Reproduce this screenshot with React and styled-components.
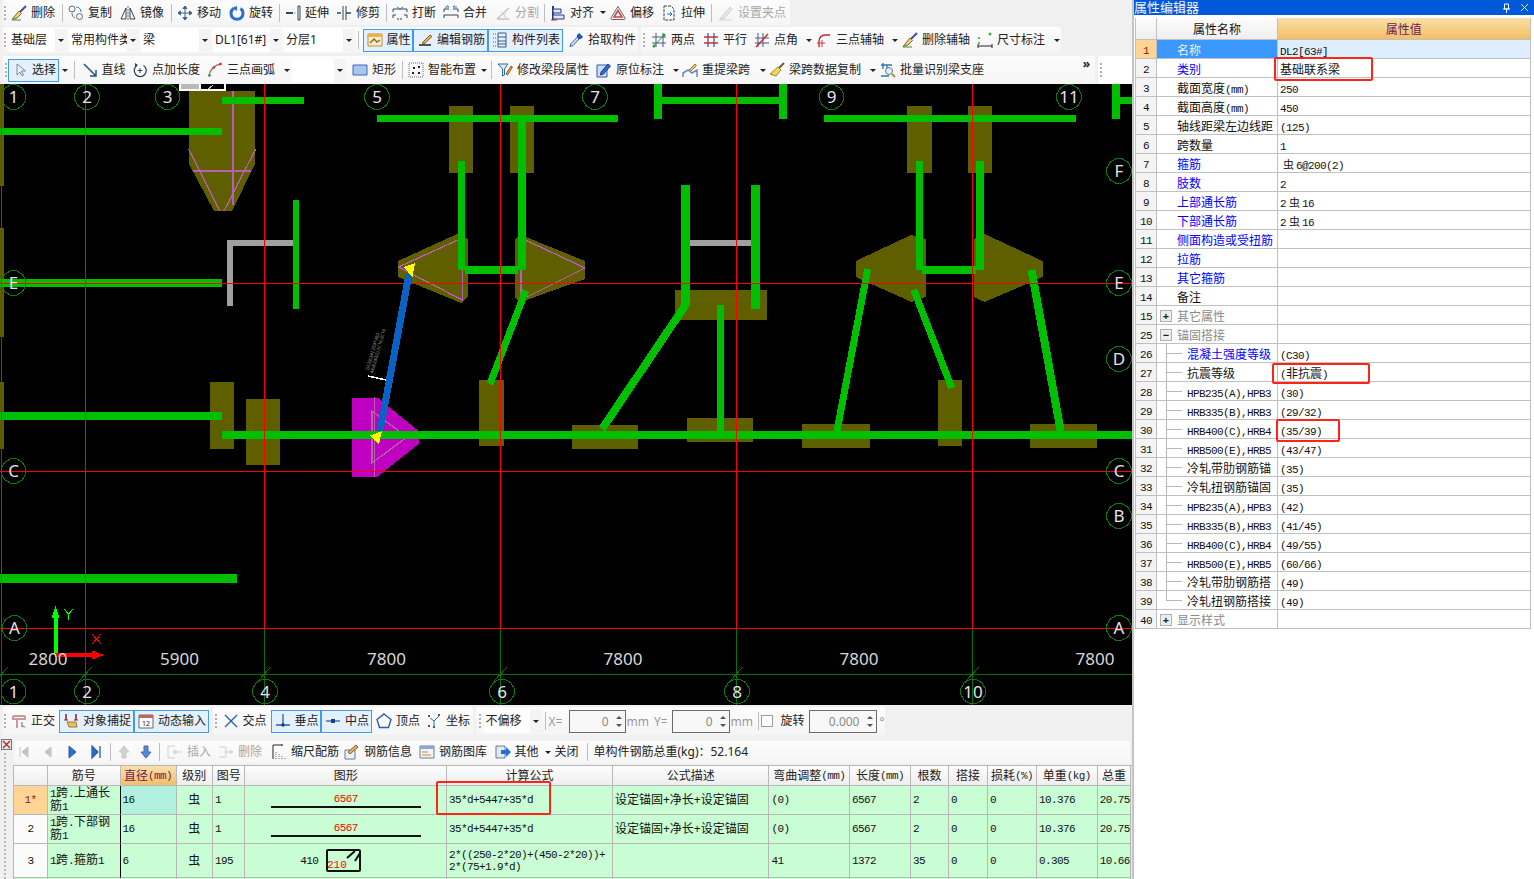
import React from 'react';
import styled, { createGlobalStyle } from 'styled-components';

const GlobalStyle = createGlobalStyle`
  html, body { margin: 0; padding: 0; background: #f0f0f0; }
  body { font-family: "Noto Sans", "Noto Sans CJK SC", sans-serif; font-size: 12px; color: #222; }
`;

/* ---------- icons ---------- */
const ICONS = {
  broom: <><path d="M15 1 9 7" stroke="#4a4a9a" strokeWidth="2" /><path d="M8 6l2.500 2.500L6 13l-5 1.500z" fill="#e8cf86" stroke="#8a6a22" /><path d="M1 15h9" stroke="#3b8f3b" /></>,
  copy: <><circle cx="4" cy="4" r="3" stroke="#667" /><circle cx="11.500" cy="11.500" r="3" stroke="#667" /><path d="M8 2c3 0 5 2 5 5M4 8c0 3 1 4 3 5" stroke="#3a78c8" /></>,
  mirror: <><path d="M8 1v14" stroke="#667" strokeDasharray="2 1" /><path d="M6 3v11H1z" stroke="#345" /><path d="M10 3v11h5z" stroke="#345" /></>,
  move: <path d="M8 1v14M1 8h14M8 1 6 3.500h4zM8 15l-2-2.500h4zM1 8l2.500-2v4zM15 8l-2.500-2v4z" stroke="#40618a" fill="#40618a" />,
  rotate: <><path d="M4.500 3.500a6 6 0 1 0 7 0" stroke="#2a6fd0" strokeWidth="3" /><path d="M8 1v5L3 3z" fill="#2a6fd0" /></>,
  extend: <><path d="M1 8h7" stroke="#345" strokeWidth="2" /><path d="M9 8h2" stroke="#8ab" /><path d="M13 1h2v14h-2z" stroke="#345" /></>,
  trim: <><path d="M1 8h4M10 8h5" stroke="#345" strokeWidth="1.500" /><path d="M7 1v14M10 1v14" stroke="#345" /></>,
  split: <><path d="M1 7V4h14v3M1 13v-3h3M15 13v-3h-3" stroke="#345" /><path d="M8 4 5 2M8 4l3-2" stroke="#2a7fd0" /><path d="M5 14h6" stroke="#345" strokeDasharray="2 1" /></>,
  merge: <><path d="M1 7V4h5M15 7V4h-5M1 13v-3h14v3" stroke="#345" /><path d="M2 2h4l-2-1.500M14 2h-4l2-1.500" stroke="#2a7fd0" /></>,
  cut: <><path d="M2 14 14 3M2 14h12" stroke="#b5b5b5" strokeWidth="1.500" /><path d="M6 7l6 6M10 5v8" stroke="#c8c8c8" /></>,
  align: <><path d="M3 1v14" stroke="#223a8a" strokeWidth="2" /><path d="M3 4h8v4H3zM3 10h11v4H3z" fill="#dfe6f5" stroke="#223a8a" /><path d="M1 15h6" stroke="#c22" /></>,
  offset: <><path d="M8 1.500 15 13a1 1 0 0 1-1 1.500H2A1 1 0 0 1 1 13z" stroke="#667" /><path d="M8 5.500 12 12H4z" stroke="#d04040" strokeWidth="1.500" /></>,
  stretch: <><path d="M3 1h7l3 3v11H3z" stroke="#345" strokeDasharray="3 1" /><path d="M6 9h5M9 7l2 2-2 2" stroke="#2a6fd0" /></>,
  grip: <><path d="M2 14 12 2l2 2L6 14z" fill="#e4e4e4" stroke="#c0c0c0" /><path d="M1 15h13" stroke="#c8c8c8" /></>,
  prop: <><path d="M1 2h14v12H1z" fill="#fff1cf" stroke="#c98a2a" /><path d="M1 2h14v3H1z" fill="#f0b050" /><path d="M3 11l4-4 3 3 3-2" stroke="#8a6a22" strokeWidth="1.500" /></>,
  edit: <><path d="M2 13h12" stroke="#222" strokeWidth="1.500" /><path d="M5 11 13 3l2 1.500L7 12z" fill="#e8b060" stroke="#8a5a22" /></>,
  list: <><path d="M1 2h3M1 6h3M1 10h3M1 14h3" stroke="#667" strokeDasharray="1 1" /><path d="M6 1h8v14H6zM6 5h8M6 9h8M6 12h8" stroke="#3a5a8a" /></>,
  pick: <><path d="M11 1.500 14.500 5 12 7 9 4z" fill="#2a5fb0" stroke="#1a3f80" /><path d="M9.500 5 3 11.500 2 14.500l3-1L11 7z" fill="#cfe3fa" stroke="#2a5fb0" /></>,
  twopoint: <><path d="M5 1v14M12 1v14M1 5h14M1 11h14" stroke="#4a5a8a" /><path d="M3 14 14 2" stroke="#3b8f3b" /><circle cx="3" cy="14" r="1.500" fill="#3b8f3b" /><circle cx="13" cy="3" r="1.500" fill="#3b8f3b" /></>,
  parallel: <><path d="M5 1v14M11 1v14" stroke="#4a5a9a" strokeWidth="1.300" /><path d="M1 5h14M1 11h14" stroke="#c03040" strokeWidth="1.300" /></>,
  angle: <><path d="M4 1v14M9 1v14M1 6h14M1 11h14" stroke="#4a5a8a" /><path d="M2 15 14 2" stroke="#d02020" strokeWidth="1.300" /></>,
  arcaxis: <><path d="M3 15V9a6 6 0 0 1 6-6h5" stroke="#d02030" strokeWidth="1.400" /><path d="M1 11h8M6 8v7" stroke="#c04050" /></>,
  dim: <><circle cx="2" cy="6" r="1" fill="#3b9b3b" /><circle cx="13" cy="2" r="1.500" fill="#3bbb3b" /><circle cx="2" cy="11" r="1" fill="#3b9b3b" /><path d="M1 14h14M1 12v4M15 12v4" stroke="#222" /></>,
  pointer: <path d="M5 2v11l3-3 2 4 1.500-1-2-4h4z" fill="#eef2fa" stroke="#7a8aa8" />,
  line: <path d="M2 2 14 14M14 8v6H8" stroke="#24557f" strokeWidth="1.500" />,
  length: <><path d="M5 3.500a6 6 0 1 0 6.500 0" stroke="#345" strokeWidth="1.300" /><path d="M8 6v5M5.500 8.500h5" stroke="#345" /><path d="M3 1l3 2-3 2z" fill="#345" /></>,
  arc: <><path d="M2 14C3 7 8 3 14 2" stroke="#d06030" strokeWidth="1.300" /><circle cx="2.500" cy="13.500" r="1.300" fill="#2a6fd0" /><circle cx="7" cy="5.500" r="1.300" fill="#2a6fd0" /><circle cx="13.500" cy="2" r="1.300" fill="#d02020" /></>,
  rect: <path d="M1 3h14v10H1z" fill="#a9c6ee" stroke="#3a68b8" />,
  smart: <><path d="M1 1h14v14H1z" stroke="#667" strokeDasharray="1 1" /><path d="M5 5h2v2H5zM10 4h2v2h-2zM4 10h2v2H4zM10 10h2v2h-2z" fill="#223" /></>,
  funnel: <><path d="M1 2h10L7.500 7v6l-2 1V7z" fill="#dbeaf8" stroke="#2a6f9f" /><path d="M9 12l5-8 1.500 1-5 8z" fill="#e8b060" stroke="#8a5a22" /></>,
  inplace: <><path d="M1 3h10v12H1z" fill="#cfe0f5" stroke="#2a5fb0" /><path d="M5 10l7-8 2.500 2-7 8-3 1z" fill="#2a6fd0" stroke="#1a3f80" /></>,
  respan: <><path d="M1 15v-4l5-3 4 3 5-3v7" stroke="#6a8ac0" strokeWidth="1.500" /><path d="M7 8l6-6 1.500 1.500-6 6z" fill="#e8c080" stroke="#a07a40" /></>,
  brushy: <><path d="M15 1 9 7" stroke="#6a5a3a" strokeWidth="2" /><path d="M9 5l3 3-5 6-6-2z" fill="#f0d860" stroke="#a08a2a" /></>,
  batch: <><path d="M1 3h11M3 1v6M1 14h8M7 3v5" stroke="#2a78b8" strokeWidth="1.400" /><circle cx="9" cy="9" r="3.500" fill="#e4eef8" stroke="#6a7a8a" /><path d="M12 12l3 3" stroke="#b08a3a" strokeWidth="2" /></>,
  ortho: <><path d="M2 3h12M2 3v3h12V3M6 6v9" stroke="#c89a9a" strokeWidth="2" /><path d="M11 9v5l1.500-1 1.500 1.500" stroke="#667" /></>,
  snap: <><path d="M3 1v6M13 1v6" stroke="#8a2020" strokeWidth="1.500" /><path d="M1 7h4M11 7h4" stroke="#8a2020" /><path d="M4 9h9l1 5H6z" fill="#e8c060" stroke="#a07a30" /></>,
  dyn: <><path d="M1 2h14v13H1z" fill="#fff" stroke="#667" /><path d="M1 2h14v3H1z" fill="#c86060" /><text x="4" y="13" fontSize="7" fill="#222" stroke="none">12</text></>,
  cross: <path d="M2 2 14 14M14 2 2 14" stroke="#2a5fb0" strokeWidth="1.400" />,
  perp: <><path d="M1 12h14M8 1v11" stroke="#2a5fa8" strokeWidth="1.300" /><circle cx="8" cy="12" r="1.800" fill="#1a3f80" /></>,
  mid: <><path d="M1 8h14" stroke="#2a5fa8" strokeWidth="1.300" /><path d="M6 6h4v4H6z" fill="#1a3f80" /></>,
  vertex: <path d="M8 1 15 6.500 12.500 14.500h-9L1 6.500z" stroke="#2a5fb0" strokeWidth="1.400" />,
  coord: <><path d="M4 5 8 8 13 3M8 8v5" stroke="#2a6fb0" /><circle cx="3" cy="3" r="1" fill="#223" /><circle cx="13" cy="2" r="1" fill="#223" /><circle cx="3" cy="13" r="1" fill="#223" /><circle cx="8" cy="14" r="1" fill="#223" /></>,
  first: <path d="M4 3v10M12 3v10L6 8z" fill="#c4c4c4" stroke="#c4c4c4" />,
  prev: <path d="M11 3v10L5 8z" fill="#c4c4c4" stroke="#c4c4c4" />,
  next: <path d="M5 2v12l7-6z" fill="#2a6fd0" stroke="#2a5fb0" />,
  last: <path d="M12 2v12M4 2v12l6-6z" fill="#2a6fd0" stroke="#2a5fb0" strokeWidth="1.300" />,
  up: <path d="M8 2 13 8h-3v6H6V8H3z" fill="#d0d0d0" stroke="#c8c8c8" />,
  down: <path d="M8 14 13 8h-3V2H6v6H3z" fill="#5a86d8" stroke="#3a68b8" />,
  insert: <><path d="M1 2h7M1 14h7M1 2v12M6 8h9M6 8l3-2v4z" stroke="#c4c4c4" /></>,
  remove: <><path d="M1 3h7v10H1M6 8h9M15 8l-3-2v4z" stroke="#c4c4c4" /></>,
  scale: <><path d="M2 1h10M2 1v14" stroke="#223" /><path d="M12 1l-2-1v2z" fill="#d02020" /><path d="M5 15V7M8 15v-5M11 15v-3M14 15v-2" stroke="#667" strokeDasharray="1 1" /></>,
  info: <><path d="M1 6h10v9H1z" fill="#eaf1fb" stroke="#6a7a8a" /><path d="M4 8l8-7 2 2-8 7z" fill="#e8b060" stroke="#8a5a22" /></>,
  lib: <><path d="M1 2h14v12H1z" fill="#f4f4f4" stroke="#6a7a9a" /><path d="M1 2h14v3H1z" fill="#8aa8d8" /><path d="M3 8h6M3 11h9" stroke="#c08a3a" /></>,
  other: <><path d="M1 2h9v12H1z" fill="#dfe8f5" stroke="#6a7a9a" /><path d="M6 6h5V3l5 5-5 5v-3H6z" fill="#2a6fd0" /></>,
};

const Glyph = styled.svg`
  width: 16px;
  height: 16px;
  flex: none;
  ${(p) => (p.$dim ? 'opacity: .75;' : '')}
`;

const Icon = ({ name, dim }) => (
  <Glyph viewBox="0 0 16 16" fill="none" $dim={dim}>{ICONS[name]}</Glyph>
);

/* ---------- layout ---------- */
const Page = styled.div`
  position: relative;
  display: grid;
  grid-template-columns: 1132px 402px;
  width: 1534px;
  height: 879px;
  overflow: hidden;
`;

const LeftPane = styled.div`
  display: flex;
  flex-direction: column;
  min-width: 0;
`;

const BarRow = styled.div`
  display: flex;
  height: ${(p) => p.$h}px;
  margin-top: ${(p) => p.$top || 0}px;
  padding-left: 3px;
  gap: ${(p) => p.$gap || 3}px;
`;

const Toolbar = styled.div`
  display: flex;
  align-items: center;
  width: ${(p) => p.$w}px;
  flex: none;
  border-radius: 2px;
  background: ${(p) => p.$white ? '#fff' : 'linear-gradient(#fcfcfc, #f5f5f5)'};
`;

const Grip = styled.span`
  display: flex;
  justify-content: center;
  width: ${(p) => p.$w}px;
  flex: none;
  &::before {
    content: "";
    width: 2px;
    height: 14px;
    background: linear-gradient(#b0b0b0 2px, transparent 2px) 0 0 / 2px 4px;
  }
`;

const Sep = styled.span`
  display: flex;
  justify-content: center;
  width: ${(p) => p.$w}px;
  flex: none;
  &::before {
    content: "";
    width: 1px;
    height: 18px;
    background: #bdbdbd;
  }
`;

const Spacer = styled.span`
  width: ${(p) => p.$w}px;
  flex: none;
`;

const Item = styled.span`
  display: flex;
  align-items: center;
  box-sizing: border-box;
  width: ${(p) => p.$w}px;
  height: 23px;
  flex: none;
  gap: 4px;
  padding-left: ${(p) => (p.$plain ? p.$indent || 0 : 4)}px;
  white-space: nowrap;
  line-height: 16px;
  color: ${(p) => (p.$dim ? '#a8a8a8' : '#222')};
  ${(p) => p.$on && `
    border: 1px solid #3f9bf0;
    padding-left: 3px;
    background: #e4f0fb;
  `}
`;

const IconOnly = styled.span`
  display: flex;
  justify-content: center;
  width: ${(p) => p.$w}px;
  flex: none;
`;

const Caret = styled.i`
  width: 0;
  height: 0;
  flex: none;
  margin-left: ${(p) => p.$ml ?? 1}px;
  border-left: 3px solid transparent;
  border-right: 3px solid transparent;
  border-top: 3px solid #222;
`;

const LoneCaret = styled.span`
  display: flex;
  justify-content: center;
  width: ${(p) => p.$w}px;
  flex: none;
`;

const Combo = styled.span`
  display: flex;
  align-items: center;
  width: ${(p) => p.$w}px;
  height: 23px;
  flex: none;
  margin-left: ${(p) => p.$ml || 0}px;
  background: #fff;
`;

const ComboText = styled.span`
  flex: 1;
  min-width: 0;
  padding-left: 2px;
  overflow: hidden;
  white-space: nowrap;
  line-height: 18px;
`;

const ComboBtn = styled.span`
  display: flex;
  align-items: center;
  justify-content: center;
  width: 12px;
  height: 100%;
  background: #f4f4f4;
`;

const Spin = styled.span`
  display: flex;
  align-items: center;
  box-sizing: border-box;
  width: ${(p) => p.$w}px;
  height: 23px;
  flex: none;
  border: 1px solid #6a6a6a;
  background: #f8f8f8;
  color: #8a8a8a;
`;

const SpinValue = styled.span`
  flex: 1;
  text-align: right;
  padding-right: 5px;
`;

const SpinArrows = styled.span`
  display: flex;
  flex-direction: column;
  gap: 5px;
  width: 11px;
  align-items: center;
  &::before, &::after {
    content: "";
    border-left: 3px solid transparent;
    border-right: 3px solid transparent;
  }
  &::before { border-bottom: 3px solid #555; }
  &::after { border-top: 3px solid #555; }
`;

const Unit = styled.span`
  width: ${(p) => p.$w}px;
  flex: none;
  padding-left: ${(p) => p.$pad || 0}px;
  box-sizing: border-box;
  color: #9a9a9a;
  font-size: 12px;
  white-space: nowrap;
`;

const Check = styled.span`
  width: 10px;
  height: 10px;
  flex: none;
  border: 1px solid #9a9a9a;
  background: #fff;
`;

const Chevron = styled.span`
  margin-left: auto;
  margin-right: 5px;
  align-self: flex-start;
  margin-top: 2px;
  font-size: 12px;
  font-weight: 700;
  line-height: 1;
`;

const CanvasWrap = styled.div`
  height: 621px;
  flex: none;
  background: #000;
  overflow: hidden;
  svg { display: block; }
`;

/* ---------- rebar table ---------- */
const Lower = styled.div`
  display: grid;
  grid-template-columns: 13px 1fr;
  margin-top: 6px;
  height: 138px;
`;

const SideStrip = styled.div`
  display: flex;
  flex-direction: column;
  align-items: center;
  gap: 2px;
  margin-top: -2px;
`;

const CloseBox = styled.svg`
  width: 11px;
  height: 11px;
  flex: none;
  margin-right: 1px;
`;

const SideDots = styled.span`
  width: 5px;
  flex: 1;
  margin-right: 3px;
  background: radial-gradient(circle, #b8b8b8 1px, transparent 1.200px) 0 0 / 4px 4px;
`;

const LowerMain = styled.div`
  min-width: 0;
  display: flex;
  flex-direction: column;
`;

const RebarBar = styled.div`
  display: flex;
  align-items: center;
  flex: none;
  height: 22px;
  margin: 0 2px 0 1px;
  background: linear-gradient(#fcfcfc, #f6f6f6);
`;

const RebarGrid = styled.div`
  display: grid;
  grid-template-columns: 34px 72.500px 56px 36.600px 32.400px 201.500px 166px 156.500px 80.500px 61px 38px 39px 49px 60.700px 33.500px;
  grid-template-rows: 20px 29px 29px 34px 10px;
  margin-top: 2px;
  border-top: 1px solid #b8b8b8;
  border-left: 1px solid #b8b8b8;
  background: #c9fdd4;
`;

const Cell = styled.div`
  display: flex;
  align-items: center;
  justify-content: ${(p) => (p.$center ? 'center' : 'flex-start')};
  box-sizing: border-box;
  min-width: 0;
  padding-left: ${(p) => (p.$center ? 0 : 2)}px;
  overflow: hidden;
  border-right: 1px solid ${(p) => (p.$hard ? '#000' : '#b8b8b8')};
  border-bottom: 1px solid #b8b8b8;
  line-height: 12px;
  background: ${(p) => p.$bg || 'transparent'};
  color: ${(p) => p.$color || '#111'};
`;

const HeadCell = styled(Cell)`
  justify-content: center;
  padding: 0;
  white-space: nowrap;
  background: ${(p) => p.$hot ? 'linear-gradient(#f9e0a8, #f4be66)' : 'linear-gradient(#fdfdfd, #eeeeee)'};
  color: ${(p) => (p.$hot ? '#6a1a5a' : '#222')};
`;

const NameText = styled.span`
  word-break: break-all;
`;

const Lat = styled.span`
  font-family: "Liberation Mono", monospace;
  font-size: 11px;
  letter-spacing: -0.6px;
  line-height: 12px;
`;

const Rank = styled.span`
  margin: 0 2px 0 3px;
  font-size: 11px;
`;

const BarShape = styled.div`
  display: flex;
  flex-direction: column;
  align-items: center;
  width: 100%;
  color: #f00;
  gap: 1px;
  &::after {
    content: "";
    width: 150px;
    height: 2px;
    background: #111;
  }
`;

const Stirrup = styled.div`
  display: flex;
  align-items: center;
  justify-content: center;
  gap: 8px;
  width: 100%;
  padding-right: 30px;
  box-sizing: border-box;
  svg { flex: none; }
`;

/* ---------- property editor ---------- */
const RightPane = styled.div`
  background: #fff;
  border-left: 2px solid #c4c4c4;
  min-width: 0;
`;

const TitleBar = styled.div`
  display: flex;
  align-items: center;
  height: 15px;
  background: #0059d8;
  color: #f4f4f4;
  font-size: 13px;
  line-height: 15px;
  overflow: hidden;
`;

const TitleTools = styled.div`
  display: flex;
  align-items: center;
  gap: 9px;
  margin-left: auto;
  margin-right: 5px;
`;

const PropGrid = styled.div`
  display: grid;
  grid-template-columns: 21px 121px 252.500px;
  grid-auto-rows: 19px;
  grid-template-rows: 22px;
  margin: 3px 0 0 1px;
  width: 394.500px;
  border-left: 1px solid #c0c0c0;
`;

const PropCell = styled.div`
  position: relative;
  display: flex;
  align-items: center;
  box-sizing: border-box;
  min-width: 0;
  padding-left: ${(p) => p.$pad || 0}px;
  padding-top: ${(p) => p.$top ?? 4}px;
  overflow: hidden;
  white-space: nowrap;
  border-right: 1px solid #c0c0c0;
  border-bottom: 1px solid #c0c0c0;
  line-height: 12px;
  background: ${(p) => p.$bg || 'transparent'};
  color: ${(p) => p.$color || '#111'};
  justify-content: ${(p) => (p.$center ? 'center' : 'flex-start')};
  ${(p) => p.$tree && `
    &::before {
      content: "";
      position: absolute;
      left: 9px;
      top: 0;
      height: ${p.$last ? '50%' : '100%'};
      border-left: 1px solid #b8b8b8;
    }
    &::after {
      content: "";
      position: absolute;
      left: 9px;
      top: 50%;
      width: 16px;
      border-top: 1px solid #b8b8b8;
    }
  `}
`;

const Toggle = styled.span`
  display: flex;
  align-items: center;
  justify-content: center;
  box-sizing: border-box;
  width: 12px;
  height: 12px;
  flex: none;
  margin: -3px 5px 0 3px;
  border: 1px solid #b0b0b0;
  background: #eee;
  color: #222;
  font-size: 11px;
  font-weight: 700;
  line-height: 1;
`;

const Mark = styled.div`
  position: absolute;
  box-sizing: border-box;
  left: ${(p) => p.$x}px;
  top: ${(p) => p.$y}px;
  width: ${(p) => p.$w}px;
  height: ${(p) => p.$h}px;
  border: 2px solid #ff2318;
  border-radius: 2px;
  pointer-events: none;
`;

/* ---------- data ---------- */
const ROW1 = [
  { i: 'broom', t: '删除', w: 54 }, { sep: 3 },
  { i: 'copy', t: '复制', w: 52 }, { i: 'mirror', t: '镜像', w: 53 }, { sep: 4 },
  { i: 'move', t: '移动', w: 52 }, { i: 'rotate', t: '旋转', w: 52 }, { sep: 4 },
  { i: 'extend', t: '延伸', w: 51 }, { i: 'trim', t: '修剪', w: 52 }, { sep: 4 },
  { i: 'split', t: '打断', w: 51 }, { i: 'merge', t: '合并', w: 52 }, { i: 'cut', t: '分割', w: 52, dim: true }, { sep: 3 },
  { i: 'align', t: '对齐', w: 60, caret: 2 }, { i: 'offset', t: '偏移', w: 51 }, { i: 'stretch', t: '拉伸', w: 51 }, { sep: 6 },
  { i: 'grip', t: '设置夹点', w: 76, dim: true },
];

const ROW2A = [
  { combo: '基础层', w: 58, ml: 2 }, { combo: '常用构件类型', w: 70, ml: 2 }, { combo: '梁', w: 70, ml: 2 },
  { combo: 'DL1[61#]', w: 69, ml: 2 }, { combo: '分层1', w: 71, ml: 2 }, { sep: 7.5 },
  { i: 'prop', t: '属性', w: 50.5, on: true }, { i: 'edit', t: '编辑钢筋', w: 75, on: true }, { i: 'list', t: '构件列表', w: 75, on: true },
  { spacer: 1 }, { i: 'pick', t: '拾取构件', w: 74 },
];

const ROW2B = [
  { i: 'twopoint', t: '两点', w: 52 }, { i: 'parallel', t: '平行', w: 51 }, { i: 'angle', t: '点角', w: 62, caret: 4 },
  { i: 'arcaxis', t: '三点辅轴', w: 86, caret: 4 }, { i: 'broom', t: '删除辅轴', w: 75 }, { i: 'dim', t: '尺寸标注', w: 88, caret: 5 },
];

const ROW3 = [
  { i: 'pointer', t: '选择', w: 50.5, on: true }, { loneCaret: 12 }, { sep: 7 },
  { i: 'line', t: '直线', w: 50.5 }, { i: 'length', t: '点加长度', w: 75 }, { i: 'arc', t: '三点画弧', w: 88, caret: 5 },
  { combo: '', w: 55 }, { spacer: 2 },
  { i: 'rect', t: '矩形', w: 52 }, { sep: 4 }, { i: 'smart', t: '智能布置', w: 85, caret: 1 }, { sep: 4 },
  { i: 'funnel', t: '修改梁段属性', w: 99 }, { i: 'inplace', t: '原位标注', w: 86, caret: 5 },
  { i: 'respan', t: '重提梁跨', w: 87, caret: 6 }, { i: 'brushy', t: '梁跨数据复制', w: 111, caret: 5 },
  { i: 'batch', t: '批量识别梁支座', w: 110 },
];

const SNAP_A = [
  { i: 'ortho', t: '正交', w: 52 }, { i: 'snap', t: '对象捕捉', w: 75, on: true }, { i: 'dyn', t: '动态输入', w: 75, on: true },
];

const SNAP_B = [
  { i: 'cross', t: '交点', w: 52 }, { i: 'perp', t: '垂点', w: 50.5, on: true }, { i: 'mid', t: '中点', w: 51, on: true },
  { i: 'vertex', t: '顶点', w: 50 }, { i: 'coord', t: '坐标', w: 50 },
];

const REBAR = [
  { only: 'first', w: 19 }, { spacer: 2.5 }, { only: 'prev', w: 24 }, { only: 'next', w: 24 }, { only: 'last', w: 24 }, { sep: 5 },
  { only: 'up', w: 22 }, { only: 'down', w: 22 }, { sep: 6.5 },
  { i: 'insert', t: '插入', w: 51, dim: true }, { i: 'remove', t: '删除', w: 53, dim: true },
  { i: 'scale', t: '缩尺配筋', w: 73 }, { i: 'info', t: '钢筋信息', w: 75 }, { i: 'lib', t: '钢筋图库', w: 75.5 },
  { i: 'other', t: '其他', w: 64, caret: 2 }, { t: '关闭', w: 27 }, { sep: 12 },
  { t: '单构件钢筋总重(kg)：52.164', w: 170 },
];

const renderItems = (list) => list.map((d, k) => {
  if (d.sep) return <Sep key={k} $w={d.sep} />;
  if (d.spacer) return <Spacer key={k} $w={d.spacer} />;
  if (d.only) return <IconOnly key={k} $w={d.w}><Icon name={d.only} /></IconOnly>;
  if (d.loneCaret) return <LoneCaret key={k} $w={d.loneCaret}><Caret $ml={0} /></LoneCaret>;
  if (d.combo !== undefined) {
    return (
      <Combo key={k} $w={d.w} $ml={d.ml}>
        <ComboText>{d.combo}</ComboText>
        <ComboBtn><Caret $ml={0} /></ComboBtn>
      </Combo>
    );
  }
  return (
    <Item key={k} $w={d.w} $on={d.on} $dim={d.dim} $plain={!d.i}>
      {d.i && <Icon name={d.i} dim={d.dim} />}
      {d.t}
      {d.caret !== undefined && <Caret $ml={d.caret} />}
    </Item>
  );
});

// latin runs use the narrow mono face, chinese runs stay at 12px
const Mixed = ({ text }) => String(text).split(/([\u4e00-\u9fff]+)/).map((s, k) => {
  if (k % 2 === 0) return s && <Lat key={k}>{s}</Lat>;
  return s === '虫' ? <Rank key={k}>{s}</Rank> : <span key={k}>{s}</span>;
});

const PROPS = [
  { n: 1, name: '名称', val: 'DL2[63#]', active: true },
  { n: 2, name: '类别', val: '基础联系梁', link: true },
  { n: 3, name: '截面宽度(mm)', val: '250' },
  { n: 4, name: '截面高度(mm)', val: '450' },
  { n: 5, name: '轴线距梁左边线距', val: '(125)' },
  { n: 6, name: '跨数量', val: '1' },
  { n: 7, name: '箍筋', val: '虫6@200(2)', link: true },
  { n: 8, name: '肢数', val: '2', link: true },
  { n: 9, name: '上部通长筋', val: '2虫16', link: true },
  { n: 10, name: '下部通长筋', val: '2虫16', link: true },
  { n: 11, name: '侧面构造或受扭筋', val: '', link: true },
  { n: 12, name: '拉筋', val: '', link: true },
  { n: 13, name: '其它箍筋', val: '', link: true },
  { n: 14, name: '备注', val: '' },
  { n: 15, name: '其它属性', val: '', group: '+' },
  { n: 25, name: '锚固搭接', val: '', group: '−' },
  { n: 26, name: '混凝土强度等级', val: '(C30)', link: true, tree: true },
  { n: 27, name: '抗震等级', val: '(非抗震)', tree: true },
  { n: 28, name: 'HPB235(A),HPB3', val: '(30)', tree: true },
  { n: 29, name: 'HRB335(B),HRB3', val: '(29/32)', tree: true },
  { n: 30, name: 'HRB400(C),HRB4', val: '(35/39)', tree: true },
  { n: 31, name: 'HRB500(E),HRB5', val: '(43/47)', tree: true },
  { n: 32, name: '冷轧带肋钢筋锚', val: '(35)', tree: true },
  { n: 33, name: '冷轧扭钢筋锚固', val: '(35)', tree: true },
  { n: 34, name: 'HPB235(A),HPB3', val: '(42)', tree: true },
  { n: 35, name: 'HRB335(B),HRB3', val: '(41/45)', tree: true },
  { n: 36, name: 'HRB400(C),HRB4', val: '(49/55)', tree: true },
  { n: 37, name: 'HRB500(E),HRB5', val: '(60/66)', tree: true },
  { n: 38, name: '冷轧带肋钢筋搭', val: '(49)', tree: true },
  { n: 39, name: '冷轧扭钢筋搭接', val: '(49)', tree: true, last: true },
  { n: 40, name: '显示样式', val: '', group: '+' },
];

const HEADERS = ['', '筋号', '直径(mm)', '级别', '图号', '图形', '计算公式', '公式描述', '弯曲调整(mm)', '长度(mm)', '根数', '搭接', '损耗(%)', '单重(kg)', '总重'];

const REBARS = [
  { no: '1*', name: '1跨.上通长筋1', dia: '16', fig: '1', calc: '35*d+5447+35*d', desc: '设定锚固+净长+设定锚固', bend: '(0)', len: '6567', cnt: '2', one: '10.376', all: '20.75', hot: true },
  { no: '2', name: '1跨.下部钢筋1', dia: '16', fig: '1', calc: '35*d+5447+35*d', desc: '设定锚固+净长+设定锚固', bend: '(0)', len: '6567', cnt: '2', one: '10.376', all: '20.75' },
  { no: '3', name: '1跨.箍筋1', dia: '6', fig: '195', calc: '2*((250-2*20)+(450-2*20))+ 2*(75+1.9*d)', desc: '', bend: '41', len: '1372', cnt: '35', one: '0.305', all: '10.66', stirrup: true },
];

/* ---------- canvas data, screen coordinates ---------- */
const OLIVE_RECTS = [
  [0, 84, 4, 186], [0, 228, 4, 337], [0, 382, 4, 449],
  [449, 106, 473, 173], [510, 106, 534, 173], [906.500, 106, 932, 173], [968, 106, 991.500, 173],
  [210, 382, 234, 449], [246, 399, 280, 465], [479, 380, 504, 446], [675, 290, 766.500, 320],
  [572, 425, 638, 449], [687, 418, 753, 442], [802, 424, 870, 448], [937.500, 380, 961.500, 446], [1030, 424, 1097, 448],
];

const OLIVE_POLYS = [
  '189,91 255,91 255,164 232,211 214,211 189,164',
  '398,261 457,234 468,239 468,297 461,303 398,277',
  '515,239 521,235 585,261 585,279 521,302 515,298',
  '855.700,261 911,235 925.500,239 925.500,297 911.600,302 855.700,277',
  '973.700,239 984.700,234 1042.500,261 1042.500,277 984.700,302 973.700,297',
];

const PURPLE = [
  'M233 91V205', 'M188.500 149 220 211', 'M255.700 149 224 211', 'M193 171H251',
  'M398.500 267 462.500 238V300Z', 'M521 238 585 268 521 300Z',
  'M372 411 407 437 372 463Z', 'M374.500 397V477',
];

const GREEN_RECTS = [
  [222, 97, 304, 104], [0, 128, 222, 135], [0, 279, 222, 287], [293, 200, 299, 309], [0, 412, 222, 420],
  [222, 431, 1132, 439], [377, 115, 618, 122], [458, 161, 465, 270], [518, 115, 526, 270], [465, 266, 518, 274],
  [654, 84, 662, 119], [779, 84, 787, 119], [662, 97, 779, 104], [1112, 84, 1120, 119], [1120, 97, 1132, 104],
  [823.500, 115, 1076, 122], [681, 185, 690, 306], [750.500, 185, 760, 309], [716.500, 305, 724, 431],
  [915.500, 161, 922.500, 270], [976, 161, 984, 270], [922, 266, 976, 274], [0, 574, 237, 583],
];

const GREEN_DIAG = [
  [525.700, 290.700, 490, 384, 7], [685.500, 305, 602, 429, 8], [867.700, 269, 837, 431, 7],
  [913.800, 290, 951.800, 388, 7], [1031.500, 270, 1060.700, 431, 8],
];

const GRID_X = [1, 85, 264, 500, 736, 972];
const GRID_Y = [283, 471, 628];

const AXES = [
  ['1', 13.500, 97], ['2', 87, 97], ['3', 167.500, 97], ['5', 377, 97], ['7', 595, 97], ['9', 831.500, 97], ['11', 1069, 97],
  ['E', 13.500, 283], ['C', 13.500, 471], ['A', 14.500, 628],
  ['F', 1119, 171], ['E', 1119, 283], ['D', 1119, 359], ['C', 1119, 471], ['B', 1119, 516], ['A', 1119, 628],
  ['1', 13.500, 691.500], ['2', 87, 691.500], ['4', 265, 691.500], ['6', 502, 691.500], ['8', 737, 691.500], ['10', 973, 691.500],
];

const DIMS = [['2800', 48], ['5900', 179.500], ['7800', 386.500], ['7800', 623], ['7800', 859], ['7800', 1095]];

const dodecagon = (cx, cy, r = 12.500) => Array.from({ length: 12 }, (_, k) => {
  const a = (Math.PI / 6) * k + Math.PI / 12;
  return `${(cx + r * Math.cos(a)).toFixed(1)},${(cy + r * Math.sin(a)).toFixed(1)}`;
}).join(' ');

const CanvasText = styled.text`
  font-family: "Noto Sans", sans-serif;
  font-size: ${(p) => p.$size}px;
  fill: ${(p) => p.$fill};
  text-anchor: middle;
`;

const Plan = () => (
  <svg width="1132" height="621" viewBox="0 84 1132 621">
    <g shapeRendering="crispEdges">
      {OLIVE_RECTS.map(([a, b, c, d], k) => <rect key={k} x={a} y={b} width={c - a} height={d - b} fill="#5f5f00" />)}
      {OLIVE_POLYS.map((p, k) => <polygon key={k} points={p} fill="#5f5f00" />)}
      <polygon points="352,398 378,398 418.500,431 418.500,444 377,477 352,477" fill="#c000c0" />
      {PURPLE.map((d, k) => <path key={k} d={d} fill="none" stroke="#b860b0" strokeWidth="1.300" />)}
      <path d="M230 243H293M230 240V306" fill="none" stroke="#a0a0a0" strokeWidth="6" />
      <rect x="690" y="240" width="60.500" height="6" fill="#a0a0a0" />
      {GREEN_RECTS.map(([a, b, c, d], k) => <rect key={k} x={a} y={b} width={c - a} height={d - b} fill="#00bf00" />)}
      {GREEN_DIAG.map(([a, b, c, d, w], k) => <line key={k} x1={a} y1={b} x2={c} y2={d} stroke="#00bf00" strokeWidth={w} />)}
      {GRID_X.map((x) => <rect key={x} x={x} y="84" width="1" height="544" fill="#f00" />)}
      {GRID_Y.map((y) => <rect key={y} x="0" y={y} width="1132" height="1" fill="#f00" />)}
      {GRID_X.map((x) => <rect key={x} x={x} y="629" width="1" height="76" fill="#0a700a" />)}
      <rect x="0" y="674" width="1132" height="1" fill="#0a700a" />
      {GRID_X.map((x) => <line key={x} x1={x - 6} y1="681" x2={x + 7} y2="667" stroke="#0a700a" />)}
      <line x1="409" y1="274" x2="380" y2="431" stroke="#0a62c4" strokeWidth="7" />
      <polygon points="403.500,267 415,263 412.500,277" fill="#ff0" />
      <polygon points="370,435.700 382,431 379,444" fill="#ff0" />
      <line x1="368" y1="376" x2="386" y2="380" stroke="#fff" strokeWidth="1.500" />
      <rect x="179" y="84" width="47" height="7" fill="#fff" />
      <rect x="181" y="84" width="18" height="5" fill="#b8b8b8" />
      <rect x="201" y="84" width="23" height="5" fill="#000" />
      <line x1="207" y1="90" x2="213" y2="85" stroke="#ccc" />
      {AXES.map(([, x, y], k) => <polygon key={k} points={dodecagon(x, y)} fill="none" stroke="#0a7a0a" />)}
      <rect x="53.500" y="616" width="4" height="39" fill="#0f0" />
      <polygon points="55.500,606 59.500,618 51.500,618" fill="#0f0" />
      <rect x="55" y="653" width="38" height="4" fill="#f00" />
      <polygon points="104,655 92,650.500 92,659.500" fill="#f00" />
      <path d="M64 609l4.500 5 4.500-5M68.500 614v6" fill="none" stroke="#0f0" />
      <path d="M92 634l9 10M101 634l-9 10" fill="none" stroke="#f00" />
    </g>
    {AXES.map(([t, x, y], k) => <CanvasText key={k} x={x} y={y + 6} $size={17} $fill="#e4e4e4">{t}</CanvasText>)}
    {DIMS.map(([t, x], k) => <CanvasText key={k} x={x} y="665" $size={17} $fill="#d8d8d8">{t}</CanvasText>)}
    <g transform="rotate(-74 368 373)">
      <CanvasText x="390" y="373" $size={4.500} $fill="#a0a0a0">DL2[63#] 250*450</CanvasText>
      <CanvasText x="392" y="378" $size={4.500} $fill="#a0a0a0">A6@200(2) 2C16;2C16</CanvasText>
    </g>
  </svg>
);

const App = () => (
  <>
    <GlobalStyle />
    <Page>
      <LeftPane>
        <BarRow $h={25}>
          <Toolbar $w={787}><Grip $w={4} />{renderItems(ROW1)}</Toolbar>
        </BarRow>
        <BarRow $h={26} $top={2}>
          <Toolbar $w={635}><Grip $w={4} />{renderItems(ROW2A)}</Toolbar>
          <Toolbar $w={420}><Grip $w={6} />{renderItems(ROW2B)}</Toolbar>
        </BarRow>
        <BarRow $h={28} $top={3}>
          <Toolbar $w={1092}>
            <Grip $w={5} />{renderItems(ROW3)}
            <Chevron>»</Chevron>
          </Toolbar>
          <Toolbar $w={34} $white><Grip $w={6} /></Toolbar>
        </BarRow>
        <CanvasWrap><Plan /></CanvasWrap>
        <BarRow $h={28} $top={2}>
          <Toolbar $w={207}><Grip $w={4} />{renderItems(SNAP_A)}</Toolbar>
          <Toolbar $w={260}><Grip $w={5.500} />{renderItems(SNAP_B)}</Toolbar>
          <Toolbar $w={408.500}>
            <Grip $w={7.500} />
            <Combo $w={58}><ComboText>不偏移</ComboText><ComboBtn><Caret $ml={0} /></ComboBtn></Combo>
            <Sep $w={7} />
            <Unit $w={20}>X=</Unit>
            <Spin $w={57}><SpinValue>0</SpinValue><SpinArrows /></Spin>
            <Unit $w={28.500} $pad={1}>mm</Unit>
            <Unit $w={17.500}>Y=</Unit>
            <Spin $w={58}><SpinValue>0</SpinValue><SpinArrows /></Spin>
            <Unit $w={27} $pad={1}>mm</Unit>
            <Sep $w={4} />
            <Check />
            <Item $w={36} $plain $indent={8}>旋转</Item>
            <Spin $w={68}><SpinValue>0.000</SpinValue><SpinArrows /></Spin>
            <Unit $w={8} $pad={3}>°</Unit>
          </Toolbar>
        </BarRow>
        <Lower>
          <SideStrip>
            <CloseBox viewBox="0 0 11 11">
              <rect x=".5" y=".5" width="10" height="10" fill="#e8e8e8" stroke="#777" />
              <path d="M2 2l7 7M9 2 2 9" stroke="#a03030" strokeWidth="1.400" />
            </CloseBox>
            <SideDots />
          </SideStrip>
          <LowerMain>
            <RebarBar>{renderItems(REBAR)}</RebarBar>
            <RebarGrid>
              {HEADERS.map((h, k) => (
                <HeadCell key={k} $hot={k === 2}><Mixed text={h} /></HeadCell>
              ))}
              {REBARS.map((r) => (
                <React.Fragment key={r.no}>
                  <Cell $center $bg={r.hot ? '#ffd494' : '#fbfbfb'} $color={r.hot ? '#8a1a1a' : '#111'}><Lat>{r.no}</Lat></Cell>
                  <Cell $hard><NameText><Mixed text={r.name} /></NameText></Cell>
                  <Cell $bg={r.hot ? '#b0f0dc' : undefined}><Lat>{r.dia}</Lat></Cell>
                  <Cell $center>虫</Cell>
                  <Cell><Lat>{r.fig}</Lat></Cell>
                  <Cell $center>
                    {r.stirrup ? (
                      <Stirrup>
                        <Lat>410</Lat>
                        <svg width="35" height="23" viewBox="0 0 35 23">
                          <rect x="1" y="1" width="33" height="21" rx="1" fill="none" stroke="#111" strokeWidth="2" />
                          <path d="M21 9l8-7M29 12l5-8" stroke="#111" strokeWidth="2" />
                          <text x="1" y="19" fontFamily="Liberation Mono, monospace" fontSize="11" fill="#f00">210</text>
                        </svg>
                      </Stirrup>
                    ) : (
                      <BarShape><Lat>6567</Lat></BarShape>
                    )}
                  </Cell>
                  <Cell><Lat>{r.calc}</Lat></Cell>
                  <Cell>{r.desc}</Cell>
                  <Cell><Lat>{r.bend}</Lat></Cell>
                  <Cell><Lat>{r.len}</Lat></Cell>
                  <Cell><Lat>{r.cnt}</Lat></Cell>
                  <Cell><Lat>0</Lat></Cell>
                  <Cell><Lat>0</Lat></Cell>
                  <Cell><Lat>{r.one}</Lat></Cell>
                  <Cell><Lat>{r.all}</Lat></Cell>
                </React.Fragment>
              ))}
              {HEADERS.map((_, k) => <Cell key={k} />)}
            </RebarGrid>
          </LowerMain>
        </Lower>
      </LeftPane>
      <RightPane>
        <TitleBar>
          属性编辑器
          <TitleTools>
            <svg width="9" height="10" viewBox="0 0 9 10" fill="none">
              <path d="M2.500 1h4v5h-4zM1 6h7M4.500 6v4" stroke="#fff" />
            </svg>
            <svg width="9" height="9" viewBox="0 0 9 9" fill="none">
              <path d="M1 1l7 7M8 1 1 8" stroke="#dfe6f5" />
            </svg>
          </TitleTools>
        </TitleBar>
        <PropGrid>
          <PropCell $top={2} $bg="linear-gradient(#fdfdfd, #eeeeee)" />
          <PropCell $top={2} $center $bg="linear-gradient(#fdfdfd, #eeeeee)">属性名称</PropCell>
          <PropCell $top={2} $center $bg="linear-gradient(#f9e0a8, #f4be66)" $color="#6a1a5a">属性值</PropCell>
          {PROPS.map((p) => {
            let nameColor = '#111';
            if (p.active) nameColor = '#e8f0ff';
            else if (p.link) nameColor = '#0000ff';
            else if (p.group) nameColor = '#8a8a8a';
            return (
              <React.Fragment key={p.n}>
                <PropCell $center $bg={p.active ? '#ffd494' : '#f4f4f4'} $color={p.active ? '#8a1a1a' : '#111'}><Lat>{p.n}</Lat></PropCell>
                <PropCell
                  $pad={p.group ? 0 : p.tree ? 30 : 20}
                  $tree={p.tree}
                  $last={p.last}
                  $bg={p.active ? '#3a98ff' : undefined}
                  $color={nameColor}
                >
                  {p.group && <Toggle>{p.group}</Toggle>}
                  <span><Mixed text={p.name} /></span>
                </PropCell>
                <PropCell $pad={2} $bg={p.active ? '#deeeff' : undefined}>
                  {p.val && <span><Mixed text={p.val} /></span>}
                </PropCell>
              </React.Fragment>
            );
          })}
        </PropGrid>
      </RightPane>
      <Mark $x={1274} $y={57} $w={99} $h={24} />
      <Mark $x={1272} $y={363} $w={98} $h={21} />
      <Mark $x={1276} $y={419} $w={64} $h={23} />
      <Mark $x={436} $y={781} $w={115} $h={34} />
    </Page>
  </>
);

export default App;
